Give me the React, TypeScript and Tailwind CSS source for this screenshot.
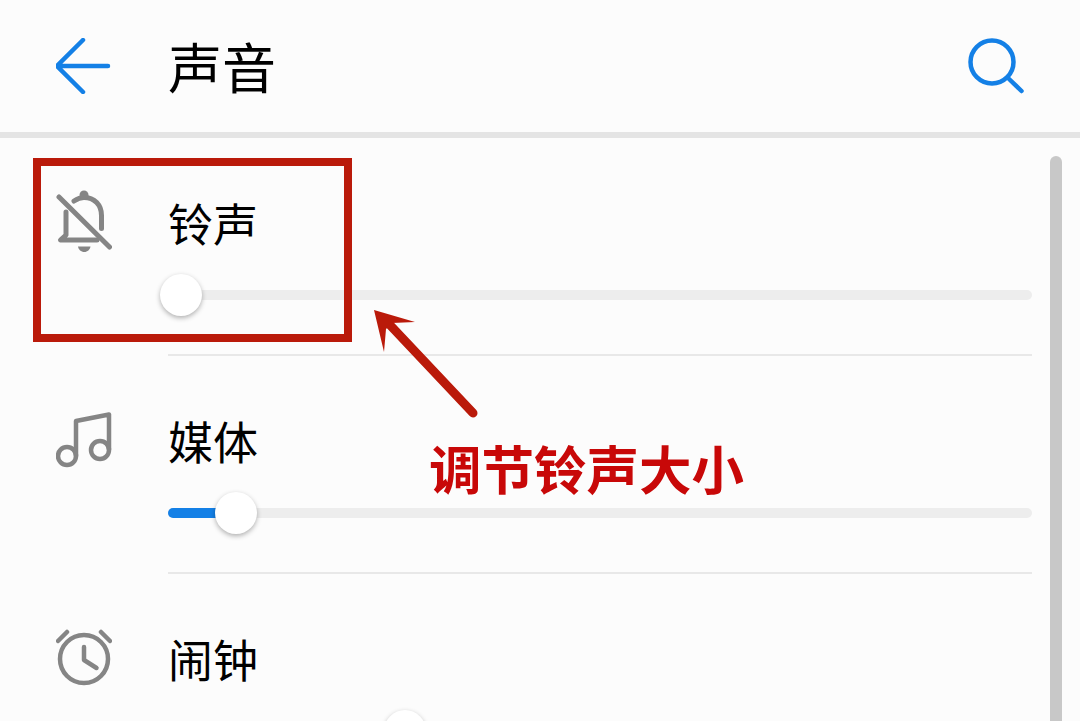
import React from "react";

const cjk = "font-['Noto_Sans_CJK_SC','Noto_Sans',sans-serif]";

const BellOffIcon = () => (
  <svg viewBox="56 190 56 64" className="h-16 w-14" fill="none" stroke="#858585" strokeWidth="5" strokeLinecap="round" strokeLinejoin="round">
    <path d="M74 201c3-2 6.500-3.500 10-3.500 10.500 0 17.500 7.500 17.500 18v13" />
    <path d="M66 212v23l-5.500 5H97" />
    <path d="M59 197l50.500 50" />
    <circle cx="84" cy="195" r="4.500" fill="#858585" stroke="none" />
    <path d="M78 246.500h12.500c-.5 3-3 5.500-6.250 5.500S78.500 249.500 78 246.500z" fill="#858585" stroke="none" />
  </svg>
);

const MusicIcon = () => (
  <svg viewBox="56 408 56 64" className="h-16 w-14" fill="none" stroke="#858585" strokeWidth="4.5" strokeLinecap="round" strokeLinejoin="round">
    <circle cx="67" cy="456" r="9" />
    <circle cx="100" cy="450" r="9" />
    <path d="M76 456v-35l33-6.500v35" />
  </svg>
);

const AlarmIcon = () => (
  <svg viewBox="56 626 56 64" className="h-16 w-14" fill="none" stroke="#858585" strokeWidth="4.5" strokeLinecap="round" strokeLinejoin="round">
    <circle cx="84" cy="659" r="24" />
    <path d="M84 647v13l12.500 8" />
    <path d="M58 641l9-9M110 641l-9-9" />
  </svg>
);

const rows = [
  { label: "铃声", icon: <BellOffIcon />, fill: "w-0", thumb: "left-[-8px]" },
  { label: "媒体", icon: <MusicIcon />, fill: "w-[60px]", thumb: "left-[47px]" },
  { label: "闹钟", icon: <AlarmIcon />, fill: "w-[236px]", thumb: "left-[216px]" },
];

const App = () => {
  return (
    <div className={`relative h-[721px] w-[1080px] overflow-hidden bg-[#fcfcfc] ${cjk}`}>
      {/* header */}
      <header className="flex h-[138px] items-center justify-between border-b-[6px] border-[#e4e4e4] pl-[56px] pr-[56px]">
        <div className="flex items-center">
          <svg viewBox="0 0 56 56" className="h-14 w-14" fill="none" stroke="#1480e6" strokeWidth="4.5" strokeLinecap="round" strokeLinejoin="round">
            <path d="M27 2L1 28l26 26M2 28h50" />
          </svg>
          <h1 className="ml-[56px] text-[54px] leading-[60px] font-normal text-black">声音</h1>
        </div>
        <svg viewBox="0 0 56 56" className="h-14 w-14" fill="none" stroke="#1480e6" strokeWidth="4.5" strokeLinecap="round">
          <circle cx="24" cy="24" r="21.500" />
          <path d="M40 40l13.500 13" />
        </svg>
      </header>

      {/* rows */}
      {rows.map((row) => (
        <section key={row.label} className="flex pl-[56px] pr-[48px]">
          <div className="mr-[56px] w-14 pt-[52px]">{row.icon}</div>
          <div className="flex-1 border-b-2 border-[#e8e8e8] pt-[55px] pb-[38px]">
            <div className="text-[45px] leading-[60px] text-black">{row.label}</div>
            <div className="mt-[21px] flex h-[42px] items-center">
              <div className="relative h-[10px] w-full rounded-full bg-[#ededed]">
                <div className={`h-full rounded-full bg-[#1480e6] ${row.fill}`} />
                <div className={`absolute top-[-16px] h-[42px] w-[42px] rounded-full bg-white shadow-[0_2px_5px_rgba(0,0,0,0.3)] ${row.thumb}`} />
              </div>
            </div>
          </div>
        </section>
      ))}

      {/* scrollbar */}
      <div className="absolute top-[156px] right-[18px] bottom-0 w-3 rounded-t-full bg-[#c8c8c8]" />

      {/* annotation */}
      <div className="absolute top-[158px] left-[33px] h-[184px] w-[319px] border-8 border-[#ba1a0a]" />
      <svg className="absolute top-[300px] left-[365px] h-[125px] w-[120px]" viewBox="365 300 120 125">
        <path d="M473 413L390 325" stroke="#ba1a0a" strokeWidth="9" strokeLinecap="round" />
        <path d="M374 310l41 12-23 1-6 6-2 23z" fill="#ba1a0a" />
      </svg>
      <div className="absolute top-[429px] left-[429px] text-[52.500px] leading-[76px] font-bold whitespace-nowrap text-[#c80808]">
        调节铃声大小
      </div>
    </div>
  );
};

export default App;
